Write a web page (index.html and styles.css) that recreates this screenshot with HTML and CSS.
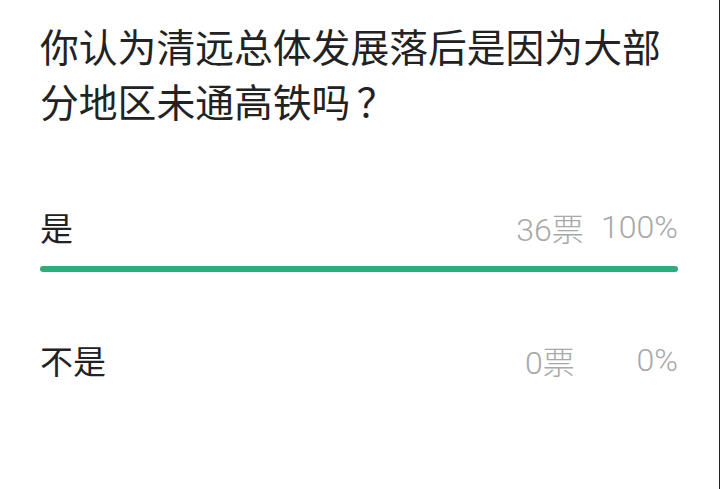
FILE: index.html
```html
<!DOCTYPE html>
<html lang="zh-CN">
<head>
<meta charset="utf-8">
<link rel="stylesheet" href="styles.css">
</head>
<body>
<div class="page">
  <h1 class="title">你认为清远总体发展落后是因为大部分地区未通高铁吗&#8198;？</h1>
  <div class="option">
    <div class="row">
      <span class="label">是</span>
      <span class="count">36票</span>
      <span class="pct">100%</span>
    </div>
    <div class="track"><div class="bar" style="width:100%"></div></div>
  </div>
  <div class="option">
    <div class="row">
      <span class="label">不是</span>
      <span class="count">0票</span>
      <span class="pct">0%</span>
    </div>
  </div>
</div>
</body>
</html>
```

FILE: styles.css
```css
html, body {
  margin: 0;
  padding: 0;
  background: #fff;
}
body {
  width: 720px;
  height: 489px;
  overflow: hidden;
  font-family: Roboto, "Noto Sans CJK SC", sans-serif;
}
.page {
  box-sizing: border-box;
  height: 489px;
  padding: 18px 41px 0 40px;
  border-right: 1px solid #222;
}
.title {
  margin: 0;
  font-family: "Noto Sans CJK SC", sans-serif;
  font-size: 38.8px;
  font-weight: 400;
  line-height: 55px;
  color: #222;
}
.title + .option {
  margin-top: 79px;
}
.option {
  display: flex;
  flex-direction: column;
}
.row {
  display: flex;
  align-items: center;
  height: 40px;
}
.label {
  flex: 1;
  font-family: "Noto Sans CJK SC", sans-serif;
  font-size: 33px;
  color: #222;
}
.count {
  width: 80px;
  text-align: center;
  font-size: 32px;
  font-weight: 300;
  color: #a8a8a8;
}
.pct {
  width: 88px;
  text-align: right;
  font-size: 32px;
  font-weight: 300;
  color: #a8a8a8;
}
.track {
  margin-top: 19px;
  height: 6px;
}
.bar {
  height: 6px;
  border-radius: 3px;
  background: #2fac7c;
}
.option + .option {
  margin-top: 68px;
}
```
